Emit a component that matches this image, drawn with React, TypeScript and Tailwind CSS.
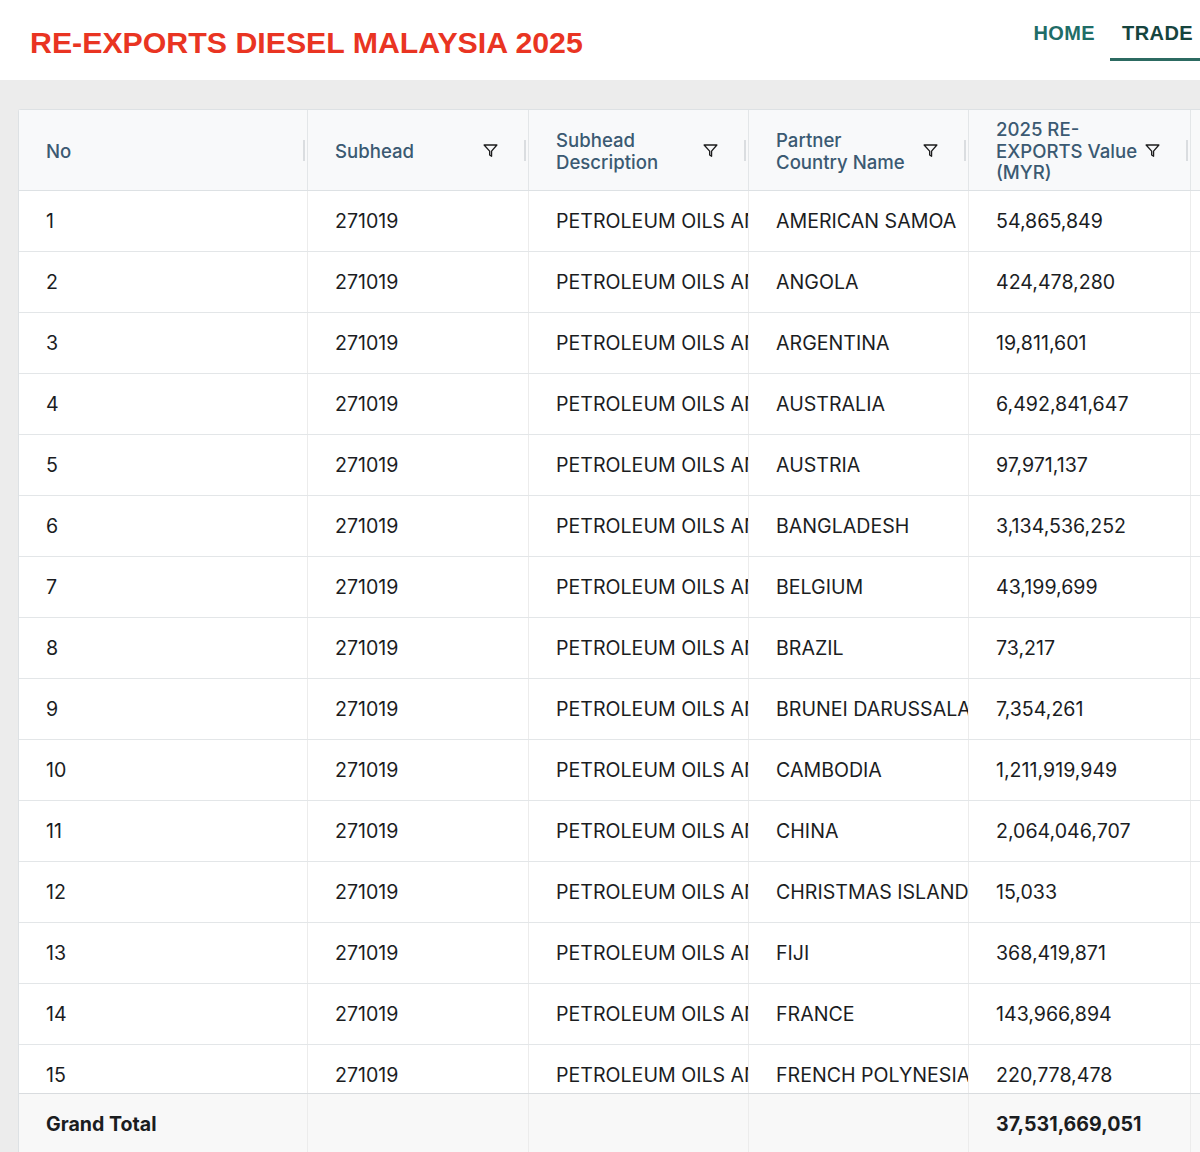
import React from "react";

const rows: [string, string, string][] = [
  ["1", "AMERICAN SAMOA", "54,865,849"],
  ["2", "ANGOLA", "424,478,280"],
  ["3", "ARGENTINA", "19,811,601"],
  ["4", "AUSTRALIA", "6,492,841,647"],
  ["5", "AUSTRIA", "97,971,137"],
  ["6", "BANGLADESH", "3,134,536,252"],
  ["7", "BELGIUM", "43,199,699"],
  ["8", "BRAZIL", "73,217"],
  ["9", "BRUNEI DARUSSALAM", "7,354,261"],
  ["10", "CAMBODIA", "1,211,919,949"],
  ["11", "CHINA", "2,064,046,707"],
  ["12", "CHRISTMAS ISLAND", "15,033"],
  ["13", "FIJI", "368,419,871"],
  ["14", "FRANCE", "143,966,894"],
  ["15", "FRENCH POLYNESIA", "220,778,478"],
];

const DESC =
  "PETROLEUM OILS AND OILS OBTAINED FROM BITUMINOUS MINERALS, OTHER THAN CRUDE";

function FilterIcon() {
  return (
    <svg width="17" height="17" viewBox="0 0 16 16" className="shrink-0">
      <path
        d="M2 2.8h12L9 8.6v4.8L7.2 12.2V8.6z"
        fill="none"
        stroke="#1c1c1c"
        strokeWidth="1.25"
        strokeLinejoin="round"
      />
    </svg>
  );
}

function Handle() {
  return <div className="w-[2px] h-[21px] bg-[#dadde0] shrink-0" />;
}

function HeadCell({
  w,
  label,
  filter = true,
}: {
  w: string;
  label: React.ReactNode;
  filter?: boolean;
}) {
  return (
    <div
      className={`${w} shrink-0 h-full flex items-center pl-[27px] border-r border-[#e3e6e8]`}
    >
      <div className="flex-1 min-w-0 pt-[3px] text-[18.6px] leading-[21.5px] font-medium text-[#3b5a72]">
        {label}
      </div>
      {filter && <FilterIcon />}
      <div className={filter ? "ml-[25px] mr-[2px]" : "ml-[8px] mr-[2px]"}>
        <Handle />
      </div>
    </div>
  );
}

function Cell({
  w,
  children,
  bold = false,
}: {
  w: string;
  children?: React.ReactNode;
  bold?: boolean;
}) {
  return (
    <div
      className={`${w} shrink-0 h-full flex items-center pl-[27px] pt-[1px] overflow-hidden whitespace-nowrap border-r border-[#ececec] ${
        bold ? "font-bold" : ""
      }`}
    >
      {children}
    </div>
  );
}

const W = ["w-[289px]", "w-[221px]", "w-[220px]", "w-[220px]", "w-[222px]"];

export default function App() {
  return (
    <div
      className="w-[1200px] h-[1152px] overflow-hidden bg-[#ececec]"
      style={{ fontFamily: "Inter, 'Liberation Sans', sans-serif" }}
    >
      {/* top bar */}
      <div className="h-[80px] bg-white flex items-start justify-between">
        <div
          className="pl-[30px] pt-[25px] text-[30.3px] leading-[36px] font-bold text-[#e93422]"
          style={{ fontFamily: "'Liberation Sans', Arial, sans-serif" }}
        >
          RE-EXPORTS DIESEL MALAYSIA 2025
        </div>
        <div
          className="flex items-start h-full"
          style={{ fontFamily: "'Liberation Sans', Arial, sans-serif" }}
        >
          <div className="flex flex-col pl-[12px] pr-[15px] pt-[21px]">
            <span className="text-[20px] leading-[24px] font-bold tracking-[0.4px] text-[#1f6d67]">
              HOME
            </span>
          </div>
          <div className="flex flex-col items-start pt-[21px]">
            <span className="pl-[12px] pr-[7px] text-[20px] leading-[24px] font-bold tracking-[0.4px] text-[#16443e]">
              TRADE
            </span>
            <div className="mt-[13px] h-[3px] w-full bg-[#2c6a61]" />
          </div>
        </div>
      </div>

      {/* grid */}
      <div className="pt-[29px] pl-[18px]">
        <div className="border-l border-t border-[#dde1e4] bg-white rounded-tl-[3px] text-[19.6px] text-[#1b1d1f]">
          {/* header */}
          <div className="h-[81px] flex bg-[#f8f9fa] border-b border-[#dde1e4]">
            <HeadCell w={W[0]} label="No" filter={false} />
            <HeadCell w={W[1]} label="Subhead" />
            <HeadCell w={W[2]} label="Subhead Description" />
            <HeadCell
              w={W[3]}
              label={
                <>
                  Partner
                  <br />
                  Country Name
                </>
              }
            />
            <HeadCell w={W[4]} label="2025 RE-EXPORTS Value (MYR)" />
            <div className="flex-1" />
          </div>

          {/* body */}
          <div className="h-[902px] overflow-hidden">
            {rows.map(([n, c, v]) => (
              <div key={n} className="h-[61px] flex border-b border-[#e3e6e8] bg-white">
                <Cell w={W[0]}>{n}</Cell>
                <Cell w={W[1]}>271019</Cell>
                <Cell w={W[2]}>{DESC}</Cell>
                <Cell w={W[3]}>{c}</Cell>
                <Cell w={W[4]}>{v}</Cell>
                <div className="flex-1" />
              </div>
            ))}
          </div>

          {/* grand total */}
          <div className="h-[62px] flex bg-[#f8f8f8] border-t border-[#d9dcdf]">
            <Cell w={W[0]} bold>
              Grand Total
            </Cell>
            <Cell w={W[1]} />
            <Cell w={W[2]} />
            <Cell w={W[3]} />
            <Cell w={W[4]} bold>
              37,531,669,051
            </Cell>
            <div className="flex-1" />
          </div>
        </div>
      </div>
    </div>
  );
}
